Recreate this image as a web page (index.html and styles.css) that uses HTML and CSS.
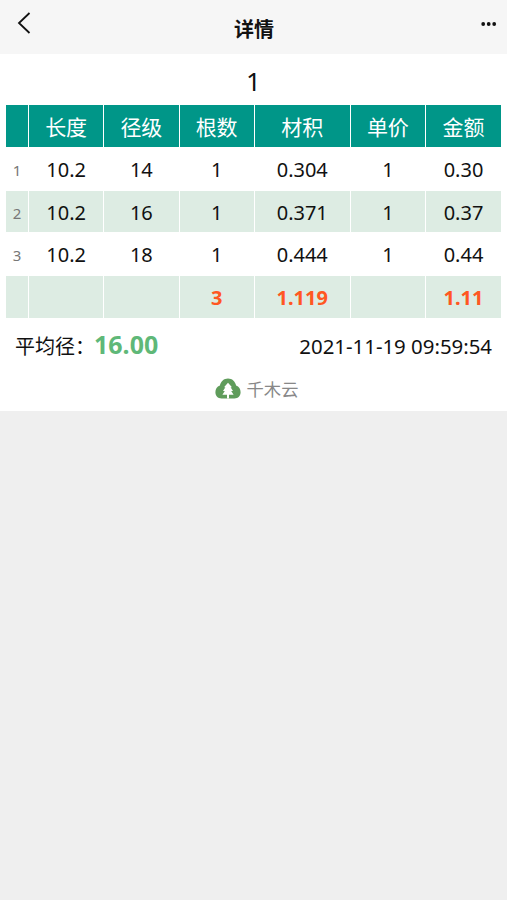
FILE: index.html
```html
<!DOCTYPE html>
<html lang="zh-CN">
<head>
  <meta charset="UTF-8">
  <meta name="viewport" content="width=device-width,initial-scale=1.0">
  <title>详情</title>
  <link rel="stylesheet" href="styles.css">
</head>
<body>
    <header class="navbar">
        <svg class="back" viewBox="0 0 14 22"><path d="M12.5 1 L2 11 L12.5 21"/></svg>
        <h1>详情</h1>
        <svg class="more" viewBox="0 0 16 4">
            <circle cx="2.2" cy="2" r="1.9"/><circle cx="7.7" cy="2" r="1.9"/><circle cx="13.2" cy="2" r="1.9"/>
        </svg>
    </header>

    <main class="detail">
        <div class="name">1</div>
        <table>
            <colgroup>
                <col class="col-no"><col><col><col><col class="col-volume"><col><col class="col-last">
            </colgroup>
            <thead>
                <tr><th></th><th>长度</th><th>径级</th><th>根数</th><th>材积</th><th>单价</th><th>金额</th></tr>
            </thead>
            <tbody>
                <tr><td class="no">1</td><td>10.2</td><td>14</td><td>1</td><td>0.304</td><td>1</td><td>0.30</td></tr>
                <tr><td class="no">2</td><td>10.2</td><td>16</td><td>1</td><td>0.371</td><td>1</td><td>0.37</td></tr>
                <tr><td class="no">3</td><td>10.2</td><td>18</td><td>1</td><td>0.444</td><td>1</td><td>0.44</td></tr>
                <tr class="total"><td></td><td></td><td></td><td>3</td><td>1.119</td><td></td><td>1.11</td></tr>
            </tbody>
        </table>
        <div class="summary">
            <div class="average">平均径：<b>16.00</b></div>
            <div class="time">2021-11-19 09:59:54</div>
        </div>
        <div class="brand">
            <svg class="logo" viewBox="0 0 26 21">
                <path class="cloud" d="M6.5 20.5 C2.8 20.5 .4 18 .4 14.3 C.4 11 2 8.6 4.9 7.6 C5.8 3.4 8.9 .6 13 .6 C17.1 .6 20.2 3.4 21.1 7.6 C24 8.6 25.6 11 25.6 14.3 C25.6 18 23.2 20.5 19.5 20.5 Z"/>
                <path class="tree" d="M13 4.8 L17 9.3 H15.6 L18 13 H16.2 L18.6 16.8 H14 V20.5 H12 V16.8 H7.4 L9.8 13 H8 L10.4 9.3 H9 Z"/>
            </svg>
            <span>千木云</span>
        </div>
    </main>
</body>
</html>
```

FILE: styles.css
```css
    * {
        box-sizing: border-box;
    }
    body {
        margin: 0;
        min-height: 100vh;
        background-color: #efefef;
        font-family: "Noto Sans", "Noto Sans CJK SC", sans-serif;
        font-size: 20px;
        color: #111;
    }
    .navbar {
        display: flex;
        align-items: flex-start;
        justify-content: space-between;
        height: 54px;
        padding: 12px 10px 0 17px;
        background-color: #f6f6f6;
    }
    .navbar h1 {
        margin: 4px 4px 0 0;
        font-size: 20px;
        line-height: 28px;
    }
    .back {
        width: 14px;
        height: 22px;
        fill: none;
        stroke: #111;
        stroke-width: 1.8;
    }
    .more {
        width: 16px;
        height: 4px;
        margin-top: 10px;
        fill: #111;
    }
    .detail {
        height: 357px;
        background-color: #fff;
    }
    .name {
        height: 50px;
        line-height: 55px;
        font-size: 26px;
        text-align: center;
    }
    table {
        width: 497px;
        margin-left: 5px;
        table-layout: fixed;
        border-collapse: separate;
        border-spacing: 1px;
    }
    .col-no {
        width: 22px;
    }
    .col-volume {
        width: 95px;
    }
    .col-last {
        width: 75px;
    }
    th, td {
        height: 42px;
        padding: 2px 0 0;
        line-height: 30px;
        text-align: center;
    }
    th {
        background-color: #009688;
        color: #fff;
        font-size: 21px;
        font-weight: normal;
    }
    tbody tr:nth-child(even) td {
        background-color: #ddece3;
    }
    tbody tr:nth-child(2) td {
        height: 41px;
    }
    td.no {
        color: #777;
        font-size: 15px;
    }
    .total td {
        color: #ff5722;
        font-weight: bold;
    }
    .summary {
        display: flex;
        align-items: baseline;
        justify-content: space-between;
        height: 51px;
        padding: 8px 15px 0;
    }
    .average b {
        margin-left: -1px;
        font-size: 25px;
        color: #5fb878;
    }
    .time {
        font-size: 20.4px;
    }
    .brand {
        display: flex;
        align-items: center;
        justify-content: center;
        gap: 6px;
        height: 36px;
        padding-left: 6px;
        color: #888;
        font-size: 17.3px;
    }
    .logo {
        width: 26px;
        height: 21px;
    }
    .cloud {
        fill: #5f9c5b;
    }
    .tree {
        fill: #fff;
    }
```
